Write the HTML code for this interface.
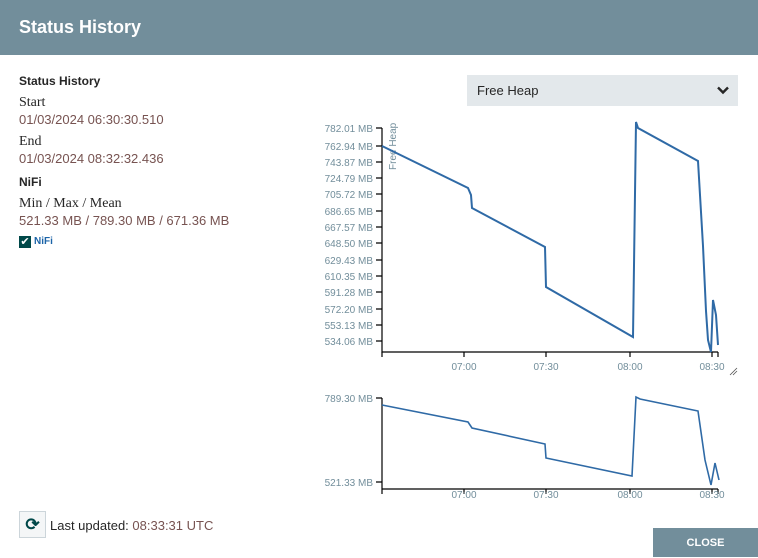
<!DOCTYPE html><html><head><style>
body{margin:0;width:758px;height:557px;overflow:hidden;background:#fff;font-family:"Liberation Sans",sans-serif;position:relative}
.hd{position:absolute;left:0;top:0;width:758px;height:55px;background:#728e9b;color:#fff;font-weight:bold;font-size:18px;line-height:55px;padding-left:19px;box-sizing:border-box}
.t{position:absolute;left:19px;font-size:13px;color:#262626}
.v{color:#775351}
.sel{position:absolute;left:467px;top:75px;width:271px;height:31px;background:#e3e8eb;font-size:13px;line-height:31px;padding-left:10px;box-sizing:border-box;color:#262626}
.cl{position:absolute;left:653px;top:528px;width:105px;height:29px;background:#728e9b;color:#fff;font-size:11px;font-weight:bold;text-align:center;line-height:30px}
svg text{font-family:"Liberation Sans",sans-serif;font-size:10px;fill:#728e9b}
</style></head><body>
<div class="hd">Status History</div>
<div class="t" style="top:74px;font-weight:bold;font-size:12px">Status History</div>
<div class="t" style="top:95px;font-family:'Liberation Serif',serif;font-size:14px">Start</div>
<div class="t v" style="top:112px">01/03/2024 06:30:30.510</div>
<div class="t" style="top:134px;font-family:'Liberation Serif',serif;font-size:14px">End</div>
<div class="t v" style="top:151px">01/03/2024 08:32:32.436</div>
<div class="t" style="top:175px;font-weight:bold;font-size:12px">NiFi</div>
<div class="t" style="top:196px;font-family:'Liberation Serif',serif;font-size:14px">Min / Max / Mean</div>
<div class="t v" style="top:213px">521.33 MB / 789.30 MB / 671.36 MB</div>
<div style="position:absolute;left:19px;top:236px;width:12px;height:12px;background:#004849;color:#fff;font-size:11px;line-height:12px;text-align:center">✔</div>
<div style="position:absolute;left:34px;top:236px;font-size:10px;color:#1c64a8;font-weight:bold">NiFi</div>
<div class="sel">Free Heap<svg style="position:absolute;right:9px;top:11px" width="12" height="9" viewBox="0 0 12 9"><path d="M1 1.5 6 6.5 11 1.5" stroke="#262626" stroke-width="2.4" fill="none"/></svg></div>
<svg style="position:absolute;left:0;top:0" width="758" height="557">
<g stroke="#000" stroke-width="1.2" fill="none">
<path d="M382 128V352H718"/>
<path d="M382 352v5M464 352v5M546 352v5M630 352v5M712 352v5M718 352v5"/>
<path d="M376 128h6M376 146h6M376 162h6M376 178h6M376 194h6M376 211h6M376 227h6M376 243h6M376 260h6M376 276h6M376 292h6M376 309h6M376 325h6M376 341h6"/>
<path d="M382 398V489H718M376 398h6M376 482h6M382 489v5M464 489v5M546 489v5M630 489v5M712 489v5M718 489v5"/>
</g>
<g text-anchor="end">
<text x="373" y="132">782.01 MB</text><text x="373" y="150">762.94 MB</text><text x="373" y="166">743.87 MB</text><text x="373" y="182">724.79 MB</text><text x="373" y="198">705.72 MB</text><text x="373" y="215">686.65 MB</text><text x="373" y="231">667.57 MB</text><text x="373" y="247">648.50 MB</text><text x="373" y="264">629.43 MB</text><text x="373" y="280">610.35 MB</text><text x="373" y="296">591.28 MB</text><text x="373" y="313">572.20 MB</text><text x="373" y="329">553.13 MB</text><text x="373" y="345">534.06 MB</text>
<text x="373" y="402">789.30 MB</text><text x="373" y="486">521.33 MB</text>
</g>
<g text-anchor="middle"><text x="464" y="370">07:00</text><text x="546" y="370">07:30</text><text x="630" y="370">08:00</text><text x="712" y="370">08:30</text>
<text x="464" y="498">07:00</text><text x="546" y="498">07:30</text><text x="630" y="498">08:00</text><text x="712" y="498">08:30</text></g>
<text transform="translate(396,170) rotate(-90)">Free Heap</text>
<path d="M730 375l7-7M733 375l4-4" stroke="#555" stroke-width="0.8"/>
<g stroke="#2f6aa6" stroke-width="2" fill="none">
<path d="M382 146L468 188 471 195 472 208 545 247 546 287 633 337 636 122 638 128 698 161 703 246 706 311 708 340 711 352 713 300 716 315 718 345"/>
<path d="M382 405L468 422 472 428 545 444 546 458 632 476 636 397 640 399 698 411 705 460 711 485 715 463 719 480" stroke-width="1.6"/>
</g>
</svg>
<div style="position:absolute;left:19px;top:511px;width:27px;height:27px;border:1px solid #ccd5da;box-sizing:border-box;background:#f4f6f7;text-align:center;line-height:25px;font-size:17px;color:#004849;font-weight:bold">⟳</div>
<div style="position:absolute;left:50px;top:518px;font-size:13px;color:#262626">Last updated: <span class="v">08:33:31 UTC</span></div>
<div class="cl">CLOSE</div>
</body></html>
